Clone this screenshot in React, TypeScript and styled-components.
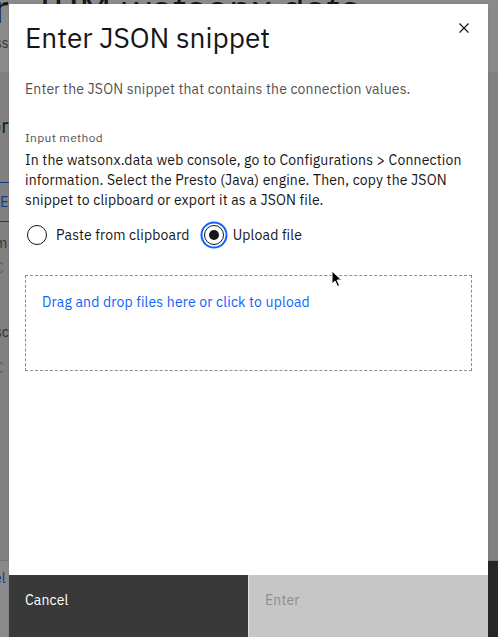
import React from "react";
import styled, { createGlobalStyle } from "styled-components";

const Global = createGlobalStyle`
  html, body { margin: 0; padding: 0; }
  body { font-family: "IBM Plex Sans", "Noto Sans", "Open Sans", sans-serif; -webkit-font-smoothing: antialiased; }
  * { box-sizing: border-box; }
`;

const Page = styled.div`
  position: relative;
  width: 498px;
  height: 637px;
  overflow: hidden;
  background: #fff;
`;

const BgHeader = styled.div`
  height: 73px;
  border-bottom: 1px solid #f0f0f0;
  display: flex;
  flex-direction: column;
  overflow: hidden;
`;

const BgTitle = styled.div`
  width: 380px;
  overflow: hidden;
  font-size: 40px;
  line-height: 40px;
  margin-top: -12px;
  margin-left: -6px;
  color: #161616;
  white-space: nowrap;
`;

const BgSub = styled.div`
  font-size: 14px;
  line-height: 20px;
  color: #525252;
  margin-top: 5px;
  margin-left: -5px;
`;

const BgBody = styled.div`
  display: flex;
  flex-direction: column;
  background: #eaeaea;
  height: 487px;
  padding-top: 40px;
`;

const BgHeading = styled.div`
  font-size: 20px;
  line-height: 26px;
  color: #161616;
  margin-left: -10px;
`;

const BgTab = styled.div`
  margin-top: 43px;
  height: 40px;
  width: 60px;
  border-top: 1px solid #0f62fe;
  border-bottom: 1px solid #0f62fe;
  color: #0f62fe;
  font-size: 14px;
  line-height: 38px;
`;

const BgText = styled.div<{ $muted?: boolean; $mt: number }>`
  margin-top: ${(p) => p.$mt}px;
  font-size: 14px;
  line-height: 20px;
  color: ${(p) => (p.$muted ? "#a8a8a8" : "#525252")};
  margin-left: -5px;
`;

const BgFooter = styled.div`
  height: 77px;
  display: flex;
  border-top: 1px solid #d0d0d0;
`;

const BgLink = styled.div`
  color: #0f62fe;
  font-size: 14px;
  line-height: 20px;
  padding-top: 7px;
  margin-left: -6px;
  flex: 1;
`;

const BgDark = styled.div`
  width: 24px;
  background: #393939;
`;

const Overlay = styled.div`
  position: absolute;
  inset: 0;
  background: rgba(22, 22, 22, 0.5);
`;

const Modal = styled.div`
  position: absolute;
  left: 9px;
  top: 4px;
  width: 479px;
  height: 635px;
  background: #fff;
  display: flex;
  flex-direction: column;
  box-shadow: 0 0 1px rgba(0, 0, 0, 0.2);
`;

const Header = styled.div`
  position: relative;
  padding: 16px 48px 0 16px;
`;

const Title = styled.h2`
  margin: 0;
  font-weight: 400;
  font-size: 28px;
  line-height: 36px;
  color: #161616;
`;

const Close = styled.button`
  position: absolute;
  top: 0;
  right: 0;
  width: 48px;
  height: 48px;
  border: none;
  background: transparent;
  display: flex;
  align-items: center;
  justify-content: center;
  padding: 0;
`;

const Body = styled.div`
  flex: 1;
  padding: 23px 16px 0 16px;
  display: flex;
  flex-direction: column;
`;

const Description = styled.p`
  margin: 0;
  font-size: 14px;
  line-height: 20px;
  letter-spacing: 0.16px;
  color: #525252;
`;

const Label = styled.div`
  margin-top: 31px;
  font-size: 12px;
  line-height: 16px;
  letter-spacing: 0.32px;
  color: #525252;
`;

const Helper = styled.p`
  margin: 4px 0 0;
  font-size: 14px;
  line-height: 20px;
  letter-spacing: 0.16px;
  color: #161616;
`;

const RadioGroup = styled.div`
  margin-top: 15px;
  display: flex;
  align-items: center;
  gap: 12px;
  height: 20px;
`;

const RadioItem = styled.label`
  display: flex;
  align-items: center;
  gap: 9px;
  font-size: 14px;
  line-height: 20px;
  letter-spacing: 0.16px;
  color: #161616;
`;

const RadioCircle = styled.span<{ $checked?: boolean }>`
  position: relative;
  width: 20px;
  height: 20px;
  margin-left: 2px;
  border-radius: 50%;
  border: 1px solid #161616;
  background: #fff;
  box-shadow: ${(p) => (p.$checked ? "0 0 0 1.5px #fff, 0 0 0 3.5px #0f62fe" : "none")};
  &::after {
    content: "";
    display: ${(p) => (p.$checked ? "block" : "none")};
    position: absolute;
    left: 50%;
    top: 50%;
    width: 10px;
    height: 10px;
    margin: -5px 0 0 -5px;
    border-radius: 50%;
    background: #161616;
  }
`;

const DropZone = styled.div`
  margin-top: 30px;
  height: 96px;
  border: 1px dashed #8d8d8d;
  padding: 15px 16px;
`;

const DropText = styled.span`
  font-size: 14px;
  line-height: 20px;
  letter-spacing: 0.16px;
  color: #0f62fe;
`;

const Footer = styled.div`
  display: flex;
  gap: 1px;
  height: 64px;
  background: #e0e0e0;
`;

const FooterButton = styled.button<{ $kind: "secondary" | "disabled" }>`
  flex: 1;
  border: none;
  text-align: left;
  padding: 15px 16px;
  display: flex;
  align-items: flex-start;
  font-family: inherit;
  font-size: 14px;
  line-height: 20px;
  letter-spacing: 0.16px;
  background: ${(p) => (p.$kind === "secondary" ? "#393939" : "#c6c6c6")};
  color: ${(p) => (p.$kind === "secondary" ? "#ffffff" : "#8d8d8d")};
`;

const Cursor = styled.svg`
  position: absolute;
  left: 331px;
  top: 270px;
`;

export default function App() {
  return (
    <Page>
      <Global />
      <BgHeader>
        <BgTitle>r&nbsp;&nbsp;&nbsp;IBM watsonx.data Presto</BgTitle>
        <BgSub>ss</BgSub>
      </BgHeader>
      <BgBody>
        <BgHeading>or</BgHeading>
        <BgTab>Er</BgTab>
        <BgText $mt={11}>m</BgText>
        <BgText $muted $mt={5}>C</BgText>
        <BgText $mt={44}>sc</BgText>
        <BgText $muted $mt={16}>C</BgText>
      </BgBody>
      <BgFooter>
        <BgLink>el</BgLink>
        <BgDark />
      </BgFooter>
      <Overlay />
      <Modal>
        <Header>
          <Title>Enter JSON snippet</Title>
          <Close aria-label="Close">
            <svg width="20" height="20" viewBox="0 0 32 32" fill="#161616">
              <path d="M24 9.4L22.6 8 16 14.6 9.4 8 8 9.4 14.6 16 8 22.6 9.4 24 16 17.4 22.6 24 24 22.6 17.4 16 24 9.4z" />
            </svg>
          </Close>
        </Header>
        <Body>
          <Description>Enter the JSON snippet that contains the connection values.</Description>
          <Label>Input method</Label>
          <Helper>
            In the watsonx.data web console, go to Configurations &gt; Connection information. Select the
            Presto (Java) engine. Then, copy the JSON snippet to clipboard or export it as a JSON file.
          </Helper>
          <RadioGroup>
            <RadioItem>
              <RadioCircle />
              Paste from clipboard
            </RadioItem>
            <RadioItem>
              <RadioCircle $checked />
              Upload file
            </RadioItem>
          </RadioGroup>
          <DropZone>
            <DropText>Drag and drop files here or click to upload</DropText>
          </DropZone>
        </Body>
        <Footer>
          <FooterButton $kind="secondary">Cancel</FooterButton>
          <FooterButton $kind="disabled">Enter</FooterButton>
        </Footer>
      </Modal>
      <Cursor width="12" height="18" viewBox="0 0 12 18">
        <path d="M1 1 L1 14 L4 11 L6.5 16.5 L8.5 15.5 L6 10 L10.5 10 Z" fill="#000" stroke="#fff" strokeWidth="1" strokeLinejoin="round" />
      </Cursor>
    </Page>
  );
}
